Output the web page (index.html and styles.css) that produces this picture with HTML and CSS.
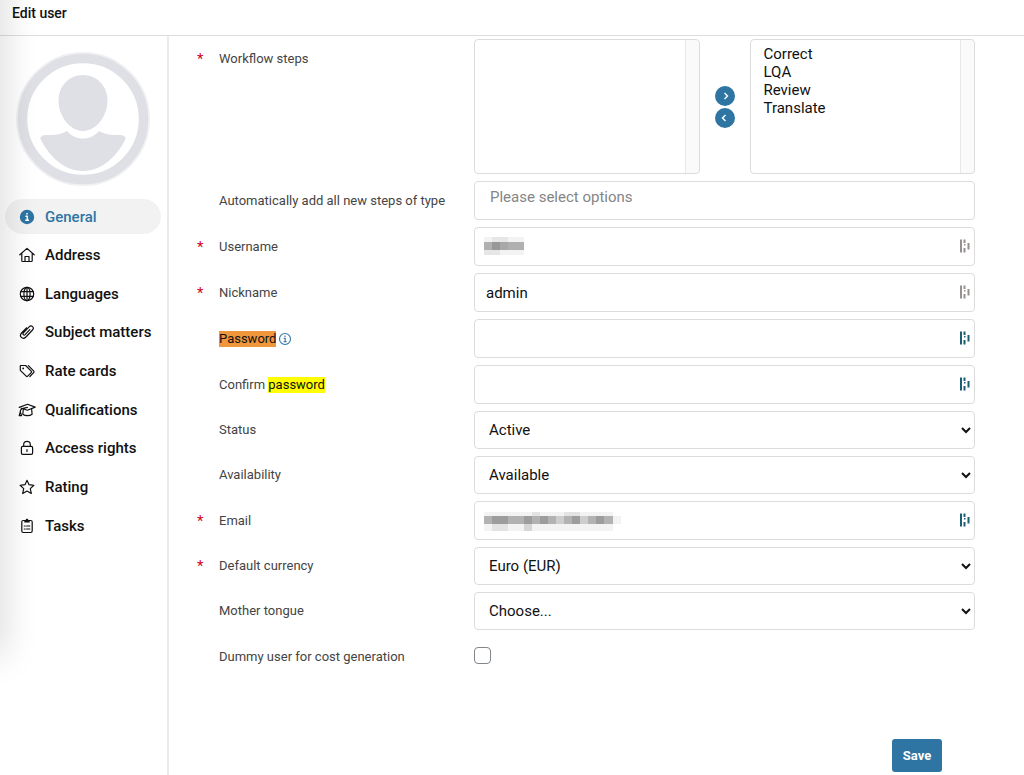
FILE: index.html
```html
<!DOCTYPE html>
<html lang="en">
<head>
    <meta charset="UTF-8">
    <meta name="viewport" content="width=device-width, initial-scale=1.0">
    <title>Edit user</title>
    <link rel="stylesheet" href="styles.css">
</head>
<body>

    <!-- Password manager mark, reused in the text fields -->
    <svg class="sprite" aria-hidden="true">
        <symbol id="key-mark" viewBox="0 0 10 14">
            <path d="M0 0.500h2v13H0zM3.500 0.500h2v3.500h-2zM4 5h1.500v1.500H4zM3.500 9h2v4.500h-2zM7.500 4h2v6.500h-2z"/>
        </symbol>
    </svg>

    <div class="edge-shadow"></div>

    <header>
        <h1>Edit user</h1>
    </header>

    <div class="layout">
        <!-- Sidebar -->
        <aside class="sidebar">
            <svg class="avatar" viewBox="0 0 134 134" aria-hidden="true">
                <circle cx="67" cy="67" r="61" fill="#fff" stroke="#f1f1f3" stroke-width="12"/>
                <circle cx="67" cy="67" r="60.500" fill="#fff" stroke="#dfe0e5" stroke-width="9.500"/>
                <path fill="#dfe0e5" d="M67 23c14 0 24.500 11 24.500 26S80 79 67 79 42.500 64 42.500 49 53 23 67 23z"/>
                <path fill="#dfe0e5" d="M51 79c8 10 24 10 32 0 7 4 12 4 20 4 5 0 8 2 6 5-8 16-23 31-42 31S33 104 25 88c-2-3 1-5 6-5 8 0 13 0 20-4z"/>
            </svg>

            <nav class="menu">
                <a class="active" href="#general">
                    <svg viewBox="0 0 16 16"><circle class="fill" cx="8" cy="8" r="7.200"/><path class="knock" d="M6.400 7.200h1.900v4M6.200 11.300h3.800M8 3.900v1.600"/></svg>
                    General
                </a>
                <a href="#address">
                    <svg viewBox="0 0 16 16"><path d="M.8 7.800L8 1.400l7.200 6.400M2.800 6.500v7.200c0 .5.300.8.800.8h8.800c.5 0 .8-.3.800-.8V6.500M6 14.300V9.500h4v4.800"/></svg>
                    Address
                </a>
                <a href="#languages">
                    <svg viewBox="0 0 16 16"><circle cx="8" cy="8" r="6.700"/><ellipse cx="8" cy="8" rx="3.100" ry="6.700"/><path d="M1.800 5.600h12.400M1.800 10.400h12.400M8 1.300v13.400"/></svg>
                    Languages
                </a>
                <a href="#subjects">
                    <svg viewBox="0 0 16 16"><path d="M10.800 5.600l-4.700 5c-1.200 1.200-2.900-.4-1.700-1.700l5.700-6c2.400-2.400 5.600.7 3.400 3.100l-6.600 7c-3.300 3.200-7.300-.7-4.300-4l4.900-5.200"/></svg>
                    Subject matters
                </a>
                <a href="#rates">
                    <svg viewBox="0 0 16 16"><path d="M1.300 3v4.300l5.900 5.900c.5.500 1 .5 1.500 0l3.500-3.600c.5-.5.500-1 0-1.500L6.600 2.500H1.800c-.3 0-.5.200-.5.500zM9.400 2.700l5.200 5.200c.5.600.5 1.200 0 1.700l-3.700 3.900"/><circle class="fill" cx="4.200" cy="5.400" r=".9"/></svg>
                    Rate cards
                </a>
                <a href="#qualifications">
                    <svg class="wide" viewBox="0 0 18 16"><path d="M1.200 5.400L9.500 2.300l7.700 2.800-7.800 3.100-6.200-1.900M9.400 5.300L4.200 6.700c-1.600.5-2 1.500-2 3.500l-1 3.400h2.400l-1.200-3.400M5.300 7.500l-.5 4.700c2.500 1.900 6.700 1.900 9.300 0l-.5-5.300"/></svg>
                    Qualifications
                </a>
                <a href="#access">
                    <svg viewBox="0 0 16 16"><rect x="2.400" y="6.400" width="11.200" height="8" rx="1.300"/><path d="M4.700 6.200V4.300c0-4 6.600-4 6.600 0v1.900M8 9.500v2"/></svg>
                    Access rights
                </a>
                <a href="#rating">
                    <svg viewBox="0 0 16 16"><path d="M8 1.300l2 4.400 4.900.6-3.600 3.300 1 4.900L8 12l-4.300 2.500 1-4.900L1.100 6.300 6 5.700z"/></svg>
                    Rating
                </a>
                <a href="#tasks">
                    <svg viewBox="0 0 16 16"><rect x="2.800" y="2.500" width="10.400" height="12" rx="1.400"/><path class="fill" d="M5.300 1.900h1.300c.4-1.600 2.400-1.600 2.800 0h1.300v2.700H5.300z"/><path d="M5.300 8h.9M7.600 8h3.200M5.300 11h.9M7.600 11h3.200"/></svg>
                    Tasks
                </a>
            </nav>
        </aside>

        <!-- User form -->
        <main>
            <form>
                <div class="row row-steps">
                    <span class="star">*</span>
                    <label for="steps">Workflow steps</label>
                    <div class="picker">
                        <select id="steps" class="list" multiple></select>
                        <div class="picker-buttons">
                            <button type="button" aria-label="Remove step"><svg viewBox="0 0 20 20"><path d="M9.500 7l3 3-3 3"/></svg></button>
                            <button type="button" aria-label="Add step"><svg viewBox="0 0 20 20"><path d="M10.500 7l-3 3 3 3"/></svg></button>
                        </div>
                        <select class="list" aria-label="Available steps" multiple>
                            <option>Correct</option>
                            <option>LQA</option>
                            <option>Review</option>
                            <option>Translate</option>
                        </select>
                    </div>
                </div>

                <div class="row">
                    <label for="autoSteps">Automatically add all new steps of type</label>
                    <button type="button" id="autoSteps" class="field options">Please select options</button>
                </div>

                <div class="row">
                    <span class="star">*</span>
                    <label for="username">Username</label>
                    <div class="input-wrap">
                        <input type="text" id="username" class="field">
                        <svg class="mosaic" width="40" height="18" viewBox="0 0 40 18" aria-hidden="true">
                            <path fill="#f3f3f3" d="M0 0h40v18H0z"/>
                            <path fill="#e6e6e6" d="M8 0h16v5H8zM0 13h16v5H0z"/>
                            <path fill="#b0b0b0" d="M0 5h40v8H0z"/>
                            <path fill="#989898" d="M8 5h8v8H8z"/>
                            <path fill="#a8a8a8" d="M16 5h8v8h-8z"/>
                        </svg>
                        <svg class="mark"><use href="#key-mark"/></svg>
                    </div>
                </div>

                <div class="row">
                    <span class="star">*</span>
                    <label for="nickname">Nickname</label>
                    <div class="input-wrap">
                        <input type="text" id="nickname" class="field" value="admin">
                        <svg class="mark"><use href="#key-mark"/></svg>
                    </div>
                </div>

                <div class="row">
                    <label for="password"><mark class="current">Password</mark><svg class="hint" viewBox="0 0 14 14"><circle cx="7" cy="7" r="5.500"/><path d="M5.700 6.400h1.500v3.300M5.500 9.800h3.200M7 3.600v1.300"/></svg></label>
                    <div class="input-wrap">
                        <input type="password" id="password" class="field">
                        <svg class="mark teal"><use href="#key-mark"/></svg>
                    </div>
                </div>

                <div class="row">
                    <label for="confirm">Confirm <mark>password</mark></label>
                    <div class="input-wrap">
                        <input type="password" id="confirm" class="field">
                        <svg class="mark teal"><use href="#key-mark"/></svg>
                    </div>
                </div>

                <div class="row">
                    <label for="status">Status</label>
                    <select id="status" class="field">
                        <option>Active</option>
                    </select>
                </div>

                <div class="row">
                    <label for="availability">Availability</label>
                    <select id="availability" class="field">
                        <option>Available</option>
                    </select>
                </div>

                <div class="row">
                    <span class="star">*</span>
                    <label for="email">Email</label>
                    <div class="input-wrap">
                        <input type="email" id="email" class="field">
                        <svg class="mosaic" width="137" height="20" viewBox="0 0 137 20" aria-hidden="true">
                            <path fill="#f3f3f3" d="M0 1h129v4H0zM0 13h129v7H0zM129 5h8v8h-8z"/>
                            <path fill="#e3e3e3" d="M48 1h8v4h-8zM80 1h16v4H80zM8 13h16v7H8z"/>
                            <path fill="#d6d6d6" d="M40 13h8v7h-8z"/>
                            <path fill="#b2b2b2" d="M0 5h129v8H0z"/>
                            <path fill="#9d9d9d" d="M8 5h16v8H8zM40 5h8v8h-8zM56 5h8v8h-8zM88 5h8v8h-8zM112 5h8v8h-8z"/>
                            <path fill="#cdcdcd" d="M72 5h8v8h-8zM96 5h8v8h-8z"/>
                        </svg>
                        <svg class="mark teal"><use href="#key-mark"/></svg>
                    </div>
                </div>

                <div class="row">
                    <span class="star">*</span>
                    <label for="currency">Default currency</label>
                    <select id="currency" class="field">
                        <option>Euro (EUR)</option>
                    </select>
                </div>

                <div class="row">
                    <label for="tongue">Mother tongue</label>
                    <select id="tongue" class="field">
                        <option>Choose...</option>
                    </select>
                </div>

                <div class="row row-check">
                    <label for="dummy">Dummy user for cost generation</label>
                    <input type="checkbox" id="dummy">
                </div>

                <div class="actions">
                    <button type="submit" class="save">Save</button>
                </div>
            </form>
        </main>
    </div>

</body>
</html>
```
FILE: styles.css
```css
* {
    box-sizing: border-box;
}
body {
    margin: 0;
    min-height: 100vh;
    display: flex;
    flex-direction: column;
    font-family: Roboto, sans-serif;
    font-size: 15px;
    color: #111;
    background-color: #fff;
    overflow-x: hidden;
}
button, input, select {
    font-family: inherit;
    font-size: inherit;
    color: inherit;
    margin: 0;
}
.sprite {
    position: absolute;
    width: 0;
    height: 0;
}
/* Shadow cast by the panel left of the page */
.edge-shadow {
    position: absolute;
    top: -60px;
    left: -20px;
    width: 20px;
    height: 715px;
    box-shadow: 0 0 36px rgba(0, 0, 0, 0.22);
    pointer-events: none;
}
header {
    height: 36px;
    padding: 4px 12px;
    border-bottom: 1px solid #dedede;
}
h1 {
    margin: 0;
    font-size: 14px;
    line-height: 18px;
    font-weight: 500;
}
.layout {
    flex: 1;
    display: flex;
}

/* Sidebar */
.sidebar {
    width: 169px;
    flex-shrink: 0;
    padding: 16px 6px 0 5px;
    border-right: 2px solid #ebebeb;
}
.avatar {
    display: block;
    width: 134px;
    height: 134px;
    margin: 0 0 13px 11px;
}
.menu {
    display: flex;
    flex-direction: column;
    justify-content: space-between;
    min-height: 344px;
}
.menu a {
    display: flex;
    align-items: center;
    gap: 10px;
    height: 35px;
    padding-left: 14px;
    border-radius: 18px;
    color: #111;
    font-weight: 500;
    text-decoration: none;
    white-space: nowrap;
}
.menu a.active {
    color: #2f75a3;
    background-color: rgba(0, 0, 0, 0.05);
}
.menu svg {
    width: 16px;
    height: 16px;
    fill: none;
    stroke: currentColor;
    stroke-width: 1.2;
    stroke-linecap: round;
    stroke-linejoin: round;
}
.menu svg.wide {
    width: 18px;
    margin: 0 -1px;
}
.menu .fill {
    fill: currentColor;
    stroke: none;
}
.menu .knock {
    stroke: #fff;
    stroke-width: 1.5;
    stroke-linecap: butt;
}

/* Form */
main {
    flex: 1;
    min-width: 0;
    padding: 3px 49px 3px 28px;
}
form {
    display: flex;
    flex-direction: column;
    gap: 7px;
}
.row {
    display: grid;
    grid-template-columns: 22px 255px minmax(0, 1fr);
    align-items: center;
}
.row label {
    grid-column: 2;
    display: flex;
    align-items: center;
    font-size: 13px;
    line-height: 16px;
    color: #444;
    white-space: pre;
}
.row-steps {
    align-items: start;
}
.row-steps .star,
.row-steps label {
    margin-top: 12px;
}
.star {
    font-size: 15px;
    line-height: 16px;
    color: #d0021b;
}
.field {
    grid-column: 3;
    width: 100%;
    height: 39px;
    border: 1px solid #dcdcdc;
    border-radius: 4px;
    padding: 0 11px;
    background-color: #fff;
}
select.field {
    height: 38px;
    padding: 0 0 0 10px;
}
.options {
    padding: 0 15px 8px;
    text-align: left;
    color: #858585;
}
.input-wrap {
    position: relative;
}
.input-wrap .field {
    display: block;
}
.mark {
    position: absolute;
    top: 12px;
    right: 5px;
    width: 10px;
    height: 14px;
    fill: #96918f;
}
.mark.teal {
    fill: #1c5f74;
}
.mosaic {
    position: absolute;
    top: 10px;
    left: 10px;
    shape-rendering: crispEdges;
}
mark {
    color: #111;
    background-color: #ff0;
}
mark.current {
    background-color: #f0963c;
}
.hint {
    width: 14px;
    height: 14px;
    margin-left: 2px;
    fill: none;
    stroke: #2f75a3;
    stroke-width: 1.1;
}
.picker {
    display: grid;
    grid-template-columns: 1fr 20px 1fr;
    align-items: center;
    gap: 15px;
}
.list {
    width: 100%;
    height: 135px;
    padding: 5px 11px;
    border: 1px solid #dcdcdc;
    border-radius: 4px;
    background: linear-gradient(to right, #e8e8e8 1px, #fafafa 1px) right / 14px 100% no-repeat #fff;
    overflow: hidden;
}
.list option {
    min-height: 0;
    height: 18px;
    padding: 0 2px;
    line-height: 18px;
}
.picker-buttons {
    display: flex;
    flex-direction: column;
    gap: 2px;
}
.picker-buttons button {
    width: 20px;
    height: 20px;
    padding: 0;
    border: none;
    border-radius: 50%;
    background-color: #2f75a3;
    cursor: pointer;
}
.picker-buttons svg {
    display: block;
    fill: none;
    stroke: #fff;
    stroke-width: 1.4;
}
.row-check {
    height: 39px;
}
.row-check input {
    grid-column: 3;
    appearance: none;
    width: 17px;
    height: 17px;
    margin-bottom: 3px;
    border: 1px solid #80868c;
    border-radius: 4px;
    background-color: #fff;
}
.row-check input:checked {
    background-color: #2f75a3;
}
.actions {
    display: flex;
    justify-content: flex-end;
    padding: 56px 33px 0 0;
}
.save {
    width: 50px;
    height: 33px;
    padding: 0;
    border: none;
    border-radius: 3px;
    font-size: 13px;
    font-weight: 700;
    color: #fff;
    background-color: #2f75a3;
    cursor: pointer;
}
```
